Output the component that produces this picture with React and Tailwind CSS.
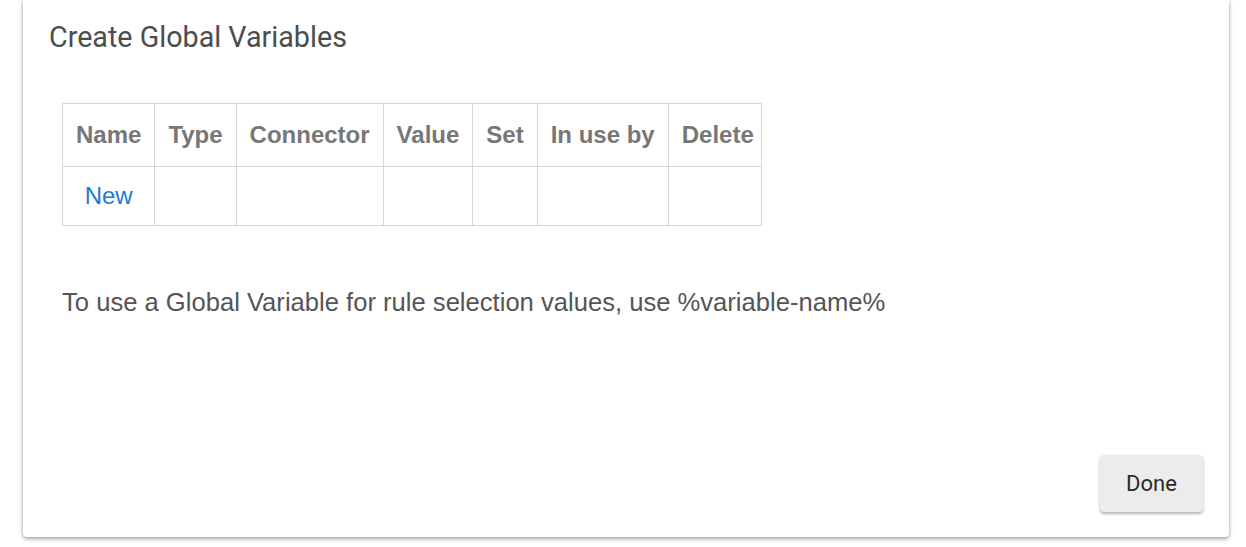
import React from 'react';

const columns = ['Name', 'Type', 'Connector', 'Value', 'Set', 'In use by', 'Delete'];

const GlobalVariablesDialog = () => {
  return (
    <div className="w-[1246px] h-[547px] bg-white overflow-hidden pl-[23px] pr-[17px]">
      <div className="h-[537px] bg-white rounded-b-[4px] shadow-[0_2px_4px_rgba(0,0,0,0.35),0_0_3px_rgba(0,0,0,0.12)] flex flex-col relative">
        {/* Title */}
        <h2
          className="pl-[26px] pt-[17px] text-[28.7px] leading-[40px] text-[#4d4d4d]"
          style={{ fontFamily: 'Roboto, sans-serif' }}
        >
          Create Global Variables
        </h2>

        {/* Table */}
        <div className="pl-[39px] pt-[46px]" style={{ fontFamily: '"Liberation Sans", Arial, sans-serif' }}>
          <table className="border-collapse">
            <thead>
              <tr className="h-[63px]">
                {columns.map((col, i) => (
                  <th
                    key={col}
                    className={
                      i === columns.length - 1
                        ? 'border border-[#d6d6d6] pl-[13px] pr-[7px] text-[24px] font-bold text-[#777777] whitespace-nowrap'
                        : 'border border-[#d6d6d6] px-[13px] text-[24px] font-bold text-[#777777] whitespace-nowrap'
                    }
                  >
                    {col}
                  </th>
                ))}
              </tr>
            </thead>
            <tbody>
              <tr className="h-[59px]">
                <td className="border border-[#d6d6d6] px-[13px] text-center text-[24px] text-[#1a7bd3]">
                  New
                </td>
                {columns.slice(1).map((col) => (
                  <td key={col} className="border border-[#d6d6d6]"></td>
                ))}
              </tr>
            </tbody>
          </table>

          <p className="pt-[61px] text-[25.6px] leading-[30px] text-[#555555]">
            To use a Global Variable for rule selection values, use %variable-name%
          </p>
        </div>

        {/* Actions */}
        <div className="mt-auto flex justify-end pr-[26px] pb-[25px]">
          <button
            className="w-[103px] h-[57px] rounded-[4px] bg-[#ececec] text-[22px] font-normal text-[#2a2a2a] shadow-[0_2px_3px_rgba(0,0,0,0.3)]"
            style={{ fontFamily: 'Roboto, sans-serif' }}
          >
            Done
          </button>
        </div>
      </div>
    </div>
  );
};

export default function App() {
  return <GlobalVariablesDialog />;
}
